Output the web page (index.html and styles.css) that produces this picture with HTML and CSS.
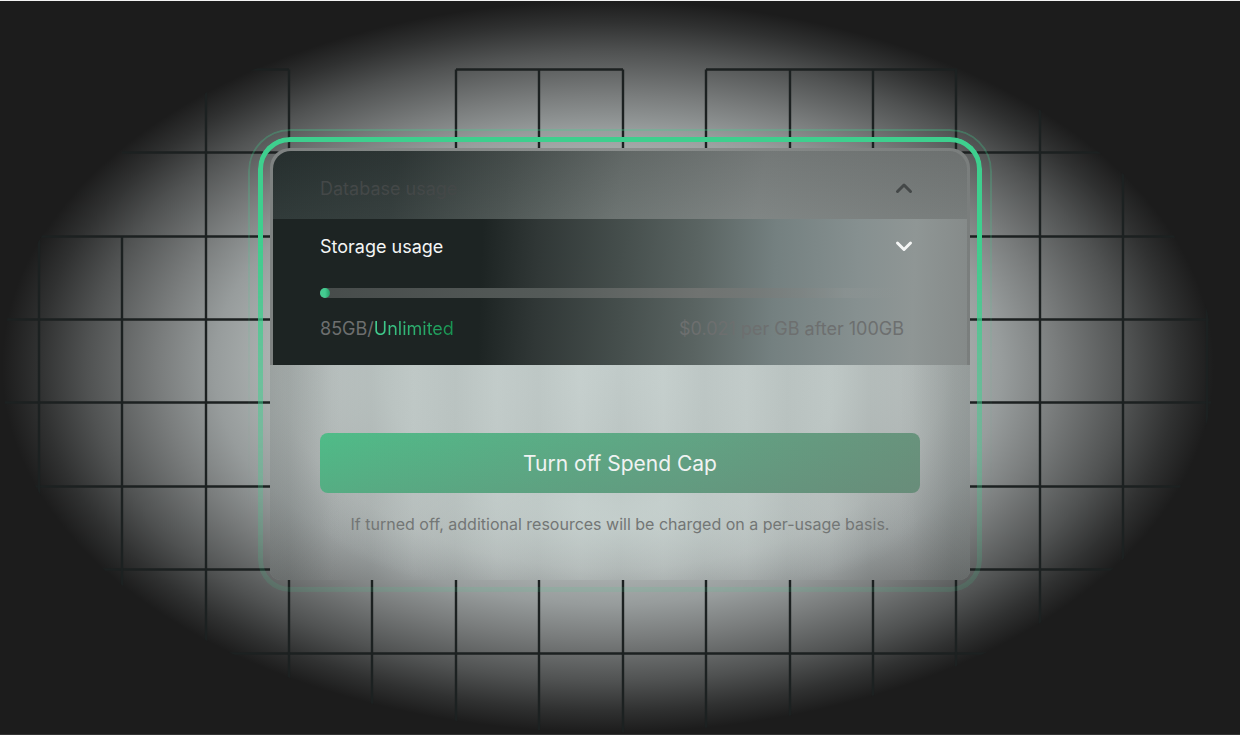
FILE: index.html
```html
<!DOCTYPE html>
<html lang="en">
<head>
    <meta charset="UTF-8">
    <meta name="viewport" content="width=device-width, initial-scale=1.0">
    <title>Spend Cap</title>
    <link rel="stylesheet" href="styles.css">
</head>
<body>

<main class="stage">
    <!-- Glow and grid behind the card -->
    <svg class="backdrop" viewBox="0 0 1240 734" preserveAspectRatio="xMidYMid slice" aria-hidden="true">
        <defs>
            <radialGradient id="glow">
                <stop offset="0" stop-color="#c6d0ce"/>
                <stop offset="0.38" stop-color="#bcc5c3"/>
                <stop offset="0.55" stop-color="#adb3b2"/>
                <stop offset="0.65" stop-color="#979c9c"/>
                <stop offset="0.74" stop-color="#7a7d7d"/>
                <stop offset="0.86" stop-color="#505252"/>
                <stop offset="0.94" stop-color="#303131"/>
                <stop offset="1" stop-color="#1c1c1c"/>
            </radialGradient>
            <clipPath id="glowEdge">
                <ellipse cx="608" cy="366" rx="606" ry="366"/>
            </clipPath>
        </defs>
        <ellipse cx="608" cy="366" rx="606" ry="366" fill="url(#glow)"/>
        <g clip-path="url(#glowEdge)" stroke="#1c2121" stroke-width="2.400" fill="none">
            <path d="M200 69H289M456 69H623M706 69H957"/>
            <path d="M122 152H1210M38 236H1210M0 319H1240M0 402H1240M0 486H1240M0 569H1240M0 653H1240"/>
            <path d="M39 236V734M122 236V734M206 69V734M289 69V734M372 152V734M456 69V734M539 69V734M623 69V734"/>
            <path d="M706 69V734M790 69V734M873 69V734M956 69V734M1040 69V734M1123 69V734M1207 69V734"/>
        </g>
    </svg>

    <section class="card">
        <button class="row row-closed" type="button">
            Database usage
            <svg class="chevron" viewBox="0 0 32 32" aria-hidden="true"><path d="M9.500 19.500L16 13L22.500 19.500"/></svg>
        </button>

        <div class="panel">
            <button class="row row-open" type="button">
                Storage usage
                <svg class="chevron" viewBox="0 0 32 32" aria-hidden="true"><path d="M9.500 13L16 19.500L22.500 13"/></svg>
            </button>
            <div class="usage">
                <progress class="meter" value="10" max="584" aria-label="Storage usage"></progress>
                <div class="usage-text">
                    <span>85GB/<span class="unlimited">Unlimited</span></span>
                    <span class="price">$0.021 per GB after 100GB</span>
                </div>
            </div>
        </div>

        <div class="footer">
            <button class="cap-button" type="button">Turn off Spend Cap</button>
            <p class="note">If turned off, additional resources will be charged on a per-usage basis.</p>
        </div>
    </section>
</main>

</body>
</html>
```

FILE: styles.css
```css
* {
    box-sizing: border-box;
}

body {
    margin: 0;
    font-family: Inter, sans-serif;
    font-size: 18px;
    background-color: #1c1c1c;
}

button {
    font: inherit;
    border: none;
    cursor: pointer;
}

.stage {
    position: relative;
    display: flex;
    justify-content: center;
    align-items: center;
    min-height: 100vh;
    padding: 24px 24px 31px;
    border-top: 1px solid #f2f2f2;
    border-bottom: 1px solid #333;
    overflow: hidden;
}

.backdrop {
    position: absolute;
    inset: 0;
    width: 100%;
    height: 100%;
}

.card {
    position: relative;
    width: 100%;
    max-width: 700px;
    border-radius: 20px 20px 10px 10px;
    padding: 3px 3px 0;
    background: linear-gradient(90deg, #7e8281, #8b8f8e 50%, #7a7e7d);
}

/* Green rings around the card, fading towards the bottom */
.card::before,
.card::after {
    content: "";
    position: absolute;
    pointer-events: none;
}

.card::before {
    inset: -11px -12px -12px;
    border: 5px solid #3ecf8e;
    border-radius: 32px;
    mask-image: linear-gradient(#000 22%, rgba(0, 0, 0, 0.6) 50%, rgba(0, 0, 0, 0.25) 80%, rgba(0, 0, 0, 0.12));
}

.card::after {
    inset: -19px -22px -20px;
    border: 2px solid #3ecf8e;
    border-radius: 42px;
    mask-image: linear-gradient(rgba(0, 0, 0, 0.3), rgba(0, 0, 0, 0.06) 50%, transparent 80%);
}

.row {
    display: flex;
    justify-content: space-between;
    align-items: center;
    width: 100%;
    padding: 0 47px;
    text-align: left;
}

.row-closed {
    height: 68px;
    padding-top: 6px;
    color: #444848;
    border-radius: 18px 18px 0 0;
    background:
        linear-gradient(rgba(60, 64, 64, 0.15), rgba(150, 160, 158, 0.12)),
        linear-gradient(100deg, #222c2b, #2a3332 18%, #454d4b 34%, #676e6c 50%, #7d8281 70%, #747877);
}

.panel {
    background:
        linear-gradient(92deg, #1d2423 30%, #303736 38%, #454e4c 50%, #5a6462 61%, #748080 72%, #869090 84%, #8f9695 92%, #858a89);
}

.row-open {
    height: 54px;
    color: #f4f6f5;
    background: none;
}

.chevron {
    width: 32px;
    height: 32px;
    fill: none;
    stroke: currentColor;
    stroke-width: 3;
    stroke-linecap: round;
    stroke-linejoin: round;
}

.usage {
    padding: 15px 63px 24px 47px;
}

.meter {
    display: block;
    width: 100%;
    height: 10px;
    appearance: none;
    border: none;
}

.meter::-webkit-progress-bar {
    border-radius: 5px;
    background: linear-gradient(90deg, #474c4b, #555b59 40%, #707371 65%, rgba(145, 150, 149, 0.4) 90%, transparent);
}

.meter::-webkit-progress-value {
    border-radius: 5px;
    background: linear-gradient(90deg, #44cb90 50%, #259b66);
}

.usage-text {
    display: flex;
    justify-content: space-between;
    margin-top: 19px;
    line-height: 24px;
    color: #6d6f6f;
}

.unlimited {
    color: transparent;
    background: linear-gradient(90deg, #43cf91, #17934f);
    background-clip: text;
}

/* Same glow as the backdrop, without the grid */
.footer {
    display: flex;
    flex-direction: column;
    align-items: center;
    margin: 0 -3px;
    padding: 68px 50px 44px;
    border-radius: 0 0 10px 10px;
    background:
        radial-gradient(300px 80px at 50% 72%, rgba(205, 217, 214, 0.6), transparent),
        repeating-linear-gradient(90deg, rgba(120, 130, 128, 0.07) 19px, rgba(215, 225, 223, 0.06) 61px, rgba(120, 130, 128, 0.07) 102px),
        linear-gradient(90deg, rgba(110, 118, 116, 0.25), transparent 10%, transparent 90%, rgba(110, 118, 116, 0.3)),
        radial-gradient(606px 366px at 49% 2px, #c6d0ce, #bcc5c3 38%, #adb3b2 55%, #979c9c 65%, #7a7d7d 74%, #525454 86%, #333434 94%, #1c1c1c);
}

.cap-button {
    width: 100%;
    height: 60px;
    border-radius: 8px;
    font-size: 21px;
    color: #f0f3f2;
    background: linear-gradient(175deg, rgba(100, 110, 106, 0), rgba(105, 125, 115, 0.45)),
        linear-gradient(90deg, #4fbc88, #5fab87 60%, #68997f);
}

.note {
    margin: 19px 0 0;
    font-size: 16px;
    line-height: 24px;
    text-align: center;
    color: #737675;
}
```
